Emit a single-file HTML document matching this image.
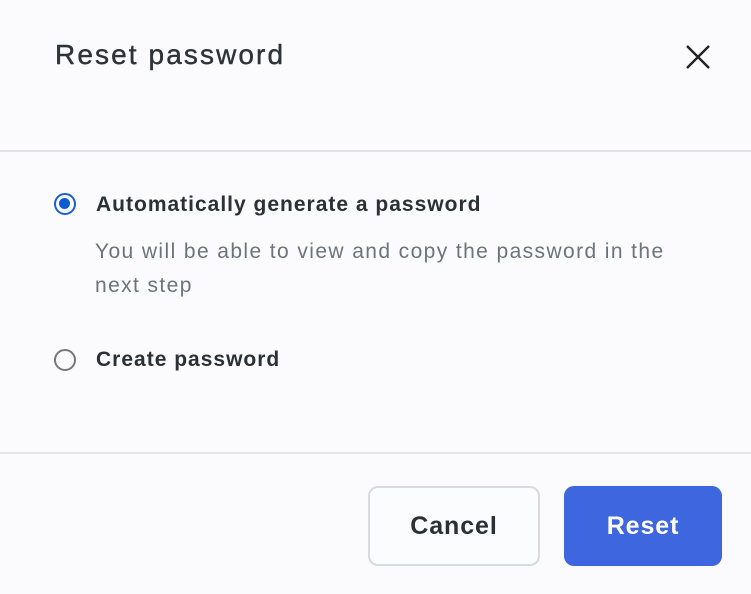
<!DOCTYPE html>
<html><head><style>
body{margin:0;width:751px;height:594px;background:#fbfbfd;font-family:"Liberation Sans",sans-serif;position:relative;overflow:hidden;color:#2b3035}
.t{position:absolute;left:55px;top:39px;font-size:28px;color:#2e3338;letter-spacing:2.1px;-webkit-text-stroke:0.4px #2e3338}
.hr{position:absolute;left:0;width:751px;height:2px;background:#e3e4e8}
.radio{position:absolute;left:54px;width:22px;height:22px;box-sizing:border-box;border-radius:50%;border:2px solid #777}
.lab{position:absolute;left:96px;font-size:21px;font-weight:bold;color:#2b3035;letter-spacing:1px}
.desc{position:absolute;left:95px;top:235px;font-size:21px;line-height:34px;color:#6b747d;width:650px;letter-spacing:1.4px}
.btn{position:absolute;top:486px;height:80px;border-radius:10px;box-sizing:border-box;font-size:25px;font-weight:bold;display:flex;align-items:center;justify-content:center;letter-spacing:0.9px}
</style></head><body>
<div class="t">Reset password</div>
<svg style="position:absolute;left:685px;top:44px" width="26" height="26" viewBox="0 0 26 26"><path d="M2 2L24 24M24 2L2 24" stroke="#222" stroke-width="2.4"/></svg>
<div class="hr" style="top:150px"></div>
<div class="radio" style="top:193px;border-color:#1a5fd1;border-width:2.5px"><div style="position:absolute;left:3px;top:3px;width:11px;height:11px;border-radius:50%;background:#0b5bd3"></div></div>
<div class="lab" style="top:193px">Automatically generate a password</div>
<div class="desc">You will be able to view and copy the password in the<br>next step</div>
<div class="radio" style="top:349px"></div>
<div class="lab" style="top:348px">Create password</div>
<div class="hr" style="top:452px"></div>
<div class="btn" style="left:368px;width:172px;border:2px solid #d8dae0;background:#fbfcfe;color:#2b3035">Cancel</div>
<div class="btn" style="left:564px;width:158px;background:#3e66de;color:#fff">Reset</div>
</body></html>
